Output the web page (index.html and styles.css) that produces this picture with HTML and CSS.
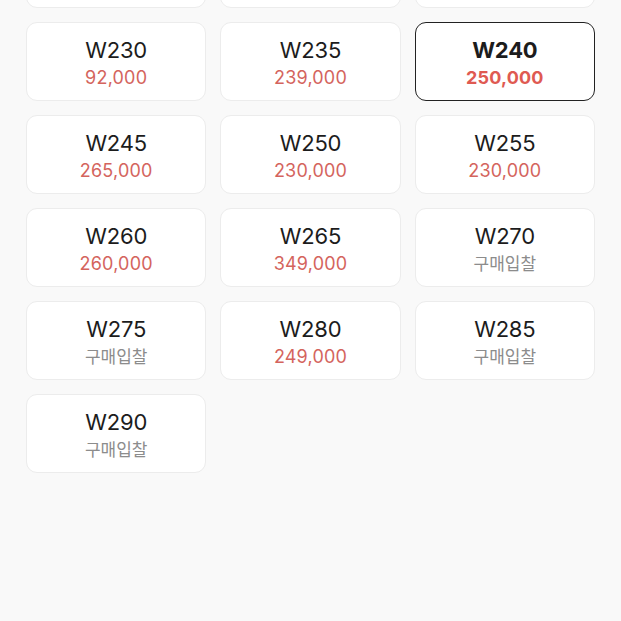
FILE: index.html
```html
<!DOCTYPE html>
<html lang="ko">
  <head>
    <meta charset="UTF-8" />
    <meta name="viewport" content="width=device-width, initial-scale=1.0" />
    <title>사이즈 선택</title>
    <link rel="stylesheet" href="styles.css">
  </head>
  <body>
    <div class="size-grid">
      <!-- fila anterior, fuera de la vista -->
      <div class="size-card"></div>
      <div class="size-card"></div>
      <div class="size-card"></div>

      <div class="size-card"><span class="size">W230</span><span class="price">92,000</span></div>
      <div class="size-card"><span class="size">W235</span><span class="price">239,000</span></div>
      <div class="size-card selected"><span class="size">W240</span><span class="price">250,000</span></div>

      <div class="size-card"><span class="size">W245</span><span class="price">265,000</span></div>
      <div class="size-card"><span class="size">W250</span><span class="price">230,000</span></div>
      <div class="size-card"><span class="size">W255</span><span class="price">230,000</span></div>

      <div class="size-card"><span class="size">W260</span><span class="price">260,000</span></div>
      <div class="size-card"><span class="size">W265</span><span class="price">349,000</span></div>
      <div class="size-card"><span class="size">W270</span><span class="price bid">구매입찰</span></div>

      <div class="size-card"><span class="size">W275</span><span class="price bid">구매입찰</span></div>
      <div class="size-card"><span class="size">W280</span><span class="price">249,000</span></div>
      <div class="size-card"><span class="size">W285</span><span class="price bid">구매입찰</span></div>

      <div class="size-card"><span class="size">W290</span><span class="price bid">구매입찰</span></div>
    </div>
  </body>
</html>
```

FILE: styles.css
```css
body {
  margin: 0;
  height: 621px;
  overflow: hidden;
  background: #f9f9f9;
  font-family: Inter, "Noto Sans CJK KR", sans-serif;
}

/* Tabla de tallas */
.size-grid {
  display: grid;
  grid-template-columns: repeat(3, 1fr);
  gap: 14px;
  margin: -71px 26px 0;
}
.size-card {
  height: 79px;
  box-sizing: border-box;
  display: flex;
  flex-direction: column;
  align-items: center;
  justify-content: center;
  gap: 3px;
  padding-top: 3px;
  background: #fff;
  border: 1px solid #ececec;
  border-radius: 11px;
}
.size-card .size {
  font-size: 22px;
  line-height: 26px;
  color: #1c1c1c;
  letter-spacing: -0.2px;
}
.size-card .price {
  font-size: 18px;
  line-height: 24px;
  color: #d4645d;
  letter-spacing: 0.2px;
}
.size-card .price.bid {
  font-size: 17px;
  color: #8c8c8c;
  letter-spacing: 0;
}
.size-card.selected {
  border: 1.5px solid #222;
}
.size-card.selected .size {
  font-weight: 700;
}
.size-card.selected .price {
  font-weight: 700;
  color: #df5a52;
}
```
